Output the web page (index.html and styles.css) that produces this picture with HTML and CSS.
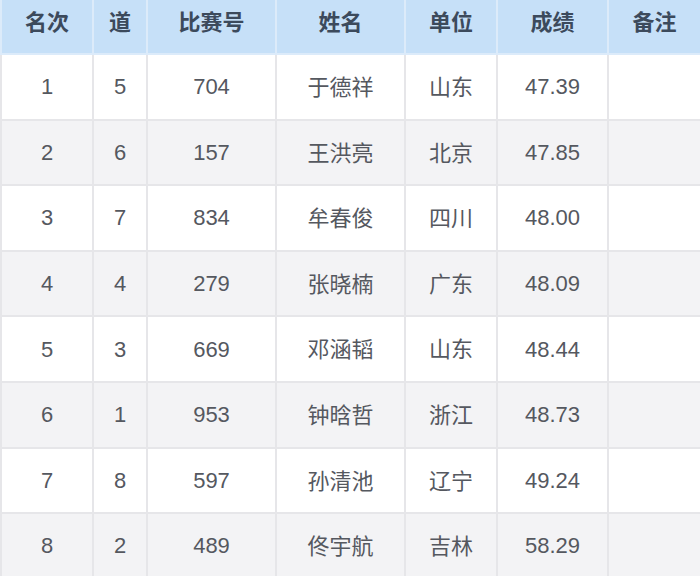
FILE: index.html
```html
<!DOCTYPE html>
<html lang="zh">
<head>
<meta charset="utf-8">
<link rel="stylesheet" href="styles.css">
</head>
<body>
<table class="results">
  <colgroup>
    <col class="c1"><col class="c2"><col class="c3"><col class="c4"><col class="c5"><col class="c6"><col class="c7">
  </colgroup>
  <thead>
    <tr><th>名次</th><th>道</th><th>比赛号</th><th>姓名</th><th>单位</th><th>成绩</th><th>备注</th></tr>
  </thead>
  <tbody>
    <tr><td>1</td><td>5</td><td>704</td><td class="cjk">于德祥</td><td class="cjk">山东</td><td>47.39</td><td></td></tr>
    <tr><td>2</td><td>6</td><td>157</td><td class="cjk">王洪亮</td><td class="cjk">北京</td><td>47.85</td><td></td></tr>
    <tr><td>3</td><td>7</td><td>834</td><td class="cjk">牟春俊</td><td class="cjk">四川</td><td>48.00</td><td></td></tr>
    <tr><td>4</td><td>4</td><td>279</td><td class="cjk">张晓楠</td><td class="cjk">广东</td><td>48.09</td><td></td></tr>
    <tr><td>5</td><td>3</td><td>669</td><td class="cjk">邓涵韬</td><td class="cjk">山东</td><td>48.44</td><td></td></tr>
    <tr><td>6</td><td>1</td><td>953</td><td class="cjk">钟晗哲</td><td class="cjk">浙江</td><td>48.73</td><td></td></tr>
    <tr><td>7</td><td>8</td><td>597</td><td class="cjk">孙清池</td><td class="cjk">辽宁</td><td>49.24</td><td></td></tr>
    <tr><td>8</td><td>2</td><td>489</td><td class="cjk">佟宇航</td><td class="cjk">吉林</td><td>58.29</td><td></td></tr>
  </tbody>
</table>
</body>
</html>
```
FILE: styles.css
```css
html, body {
  margin: 0;
  padding: 0;
  background: #ffffff;
  overflow: hidden;
}
.results {
  width: 700px;
  border-collapse: collapse;
  table-layout: fixed;
  font-family: "Liberation Sans", "Noto Sans CJK SC", sans-serif;
  font-size: 22px;
  color: #55585f;
}
.c1 { width: 92px; }
.c2 { width: 54px; }
.c3 { width: 129px; }
.c4 { width: 129px; }
.c5 { width: 92px; }
.c6 { width: 111px; }
.c7 { width: 93px; }
.results th {
  height: 54px;
  padding: 0 0 12px 0;
  box-sizing: border-box;
  background: #c6e0f8;
  color: #3c4a5c;
  font-family: "Noto Sans CJK SC", sans-serif;
  font-weight: bold;
  font-size: 22px;
  line-height: 1.2;
  text-align: center;
  border: 2px solid #dcebfa;
  border-top: none;
}
.results td {
  height: 62.6px;
  padding: 1px 0 0 0;
  text-align: center;
  border: 2px solid #e6e6e9;
}
.results td.cjk {
  height: 60.6px;
  font-family: "Noto Sans CJK SC", sans-serif;
  line-height: 1.2;
  padding: 0 0 3px 0;
}
.results tbody tr:nth-child(even) td {
  background: #f3f3f5;
}
```
